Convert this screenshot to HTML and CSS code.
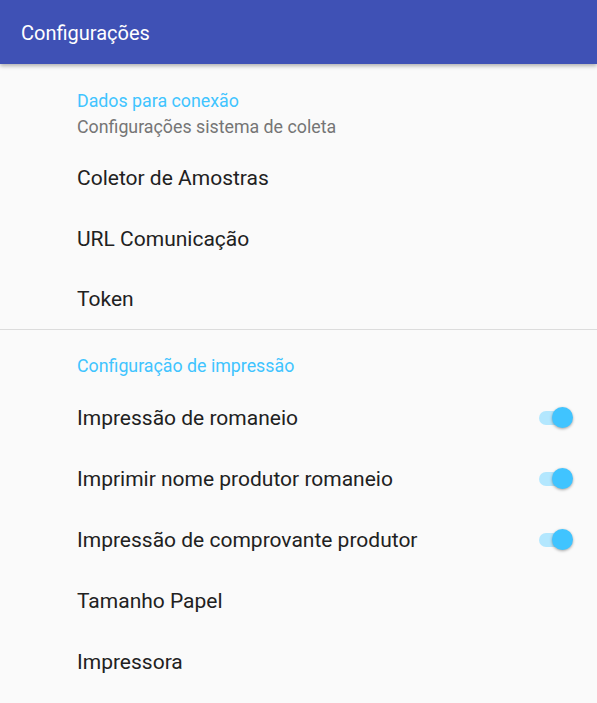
FILE: index.html
```html
<!DOCTYPE html>
<html lang="pt">
<head>
<meta charset="utf-8">
<link rel="stylesheet" href="styles.css">
</head>
<body>
<header class="appbar"><span class="appbar-title">Configurações</span></header>
<main class="prefs">
  <section class="group group-first">
    <div class="category">Dados para conexão</div>
    <div class="category-summary">Configurações sistema de coleta</div>
    <div class="row">Coletor de Amostras</div>
    <div class="row">URL Comunicação</div>
    <div class="row row-last">Token</div>
  </section>
  <section class="group group-second">
    <div class="category">Configuração de impressão</div>
    <div class="row"><span>Impressão de romaneio</span><span class="switch"><span class="track"></span><span class="thumb"></span></span></div>
    <div class="row"><span>Imprimir nome produtor romaneio</span><span class="switch"><span class="track"></span><span class="thumb"></span></span></div>
    <div class="row"><span>Impressão de comprovante produtor</span><span class="switch"><span class="track"></span><span class="thumb"></span></span></div>
    <div class="row">Tamanho Papel</div>
    <div class="row">Impressora</div>
  </section>
</main>
</body>
</html>
```
FILE: styles.css
```css
* { box-sizing: border-box; }
html, body { margin: 0; padding: 0; }
body {
  width: 597px;
  height: 703px;
  overflow: hidden;
  background: #fafafa;
  font-family: Roboto, "Noto Sans", sans-serif;
  color: #212121;
}
.appbar {
  height: 64px;
  background: #3f51b5;
  display: flex;
  align-items: center;
  padding-left: 21px;
  box-shadow: 0 2px 4px rgba(0,0,0,0.3);
  position: relative;
  z-index: 1;
}
.appbar-title {
  color: #fff;
  font-size: 20px;
  line-height: 24px;
  padding-top: 2px;
}
.prefs { display: flex; flex-direction: column; }
.group { display: flex; flex-direction: column; padding-left: 77px; }
.group-first { padding-top: 25px; border-bottom: 1px solid #dcdcdc; }
.group-second { padding-top: 24px; }
.category {
  color: #40c4ff;
  font-size: 17.8px;
  line-height: 24px;
}
.category-summary {
  color: #757575;
  font-size: 17.8px;
  line-height: 24px;
  margin-top: 2px;
  margin-bottom: 8px;
}
.group-second .category { margin-bottom: 9px; }
.row {
  height: 61px;
  display: flex;
  align-items: center;
  justify-content: space-between;
  font-size: 21px;
  padding-right: 24px;
}
.row-last { height: 60px; }
.switch {
  position: relative;
  width: 36px;
  height: 22px;
  display: block;
}
.track {
  position: absolute;
  left: 2px;
  top: 4px;
  width: 28px;
  height: 14px;
  border-radius: 7px;
  background: #b3e7fe;
}
.thumb {
  position: absolute;
  left: 15px;
  top: 0;
  width: 21px;
  height: 21px;
  border-radius: 50%;
  background: #40c4ff;
  box-shadow: 0 1px 3px rgba(0,0,0,0.35);
}
```
